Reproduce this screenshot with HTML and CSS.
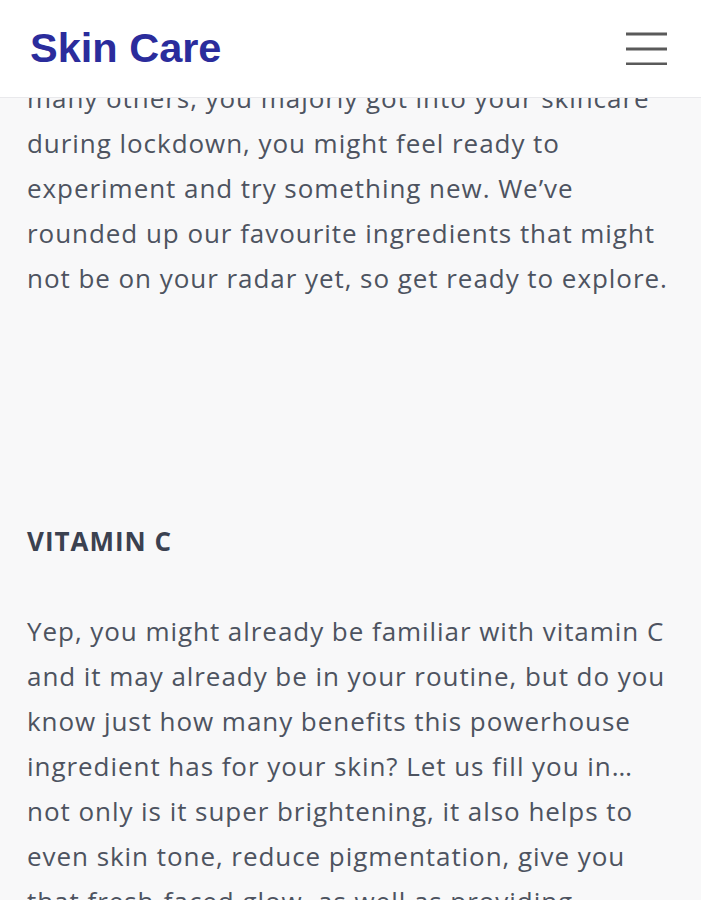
FILE: index.html
```html
<!DOCTYPE html>
<html lang="en">
<head>
<meta charset="utf-8">
<title>Skin Care</title>
<link rel="stylesheet" href="styles.css">
</head>
<body>
<header class="topbar">
  <div class="brand">Skin Care</div>
  <button class="menu" aria-label="Menu">
    <svg width="44" height="36" viewBox="0 0 44 36"><path d="M1 5H42M1 20H42M1 35H42" stroke="#5a5a5a" stroke-width="3"/></svg>
  </button>
</header>
<main class="article">
  <p class="para">many others, you majorly got into your skincare during lockdown, you might feel ready to experiment and try something new. We’ve rounded up our favourite ingredients that might not be on your radar yet, so get ready to explore.</p>
  <div class="spacer"></div>
  <h2 class="heading">VITAMIN C</h2>
  <p class="para">Yep, you might already be familiar with vitamin C and it may already be in your routine, but do you know just how many benefits this powerhouse ingredient has for your skin? Let us fill you in… not only is it super brightening, it also helps to even skin tone, reduce pigmentation, give you that fresh-faced glow, as well as providing protection against environmental damage.</p>
</main>
</body>
</html>
```
FILE: styles.css
```css
html, body {
  margin: 0;
  padding: 0;
}
body {
  background: #f8f8f9;
  font-family: "Open Sans", "Liberation Sans", sans-serif;
  overflow: hidden;
}
.topbar {
  position: fixed;
  top: 0;
  left: 0;
  right: 0;
  height: 98px;
  background: #ffffff;
  border-bottom: 1px solid #e9e9ec;
  display: flex;
  align-items: center;
  justify-content: space-between;
  padding: 0 32px 0 30px;
  box-sizing: border-box;
  z-index: 10;
}
.brand {
  font-family: "Liberation Sans", Arial, sans-serif;
  font-weight: bold;
  font-size: 41.5px;
  color: #2b2c9c;
  margin-top: -2px;
}
.menu {
  background: none;
  border: 0;
  padding: 0;
  margin: 0 0 4px 0;
  display: flex;
}
.article {
  padding: 76px 27px 0 27px;
}
.para {
  margin: 0;
  font-size: 26px;
  line-height: 45px;
  letter-spacing: 0.95px;
  color: #4d5360;
}
.spacer {
  height: 218px;
}
.heading {
  margin: 0 0 45px 0;
  font-size: 26px;
  line-height: 45px;
  letter-spacing: 1px;
  font-weight: 700;
  color: #3b4150;
}
```
